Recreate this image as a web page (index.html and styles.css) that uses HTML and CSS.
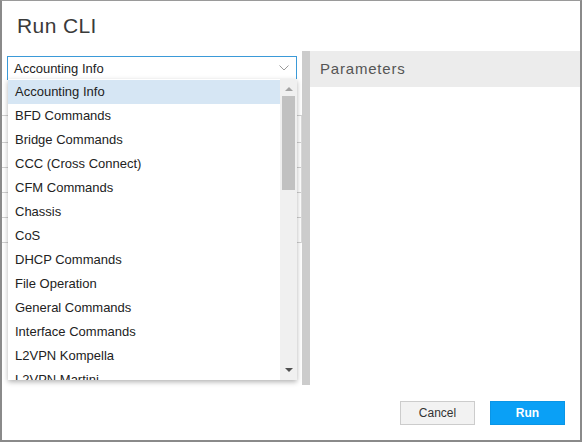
FILE: index.html
```html
<!DOCTYPE html>
<html>
<head>
<meta charset="utf-8">
<link rel="stylesheet" href="styles.css">
</head>
<body>
<div class="dialog">
  <div class="title">Run CLI</div>
  <div class="content">
    <div class="left">
      <div class="select">
        <span>Accounting Info</span>
        <svg class="chev" width="10" height="6" viewBox="0 0 10 6"><polyline points="0.5,0.5 5,5 9.5,0.5" fill="none" stroke="#9a9a9a" stroke-width="1"/></svg>
      </div>
      <div class="table">
        <div class="row"></div>
        <div class="row"></div>
        <div class="row"></div>
        <div class="row"></div>
        <div class="row"></div>
      </div>
      <div class="dropdown">
        <div class="items">
          <div class="item sel">Accounting Info</div>
          <div class="item">BFD Commands</div>
          <div class="item">Bridge Commands</div>
          <div class="item">CCC (Cross Connect)</div>
          <div class="item">CFM Commands</div>
          <div class="item">Chassis</div>
          <div class="item">CoS</div>
          <div class="item">DHCP Commands</div>
          <div class="item">File Operation</div>
          <div class="item">General Commands</div>
          <div class="item">Interface Commands</div>
          <div class="item">L2VPN Kompella</div>
          <div class="item">L2VPN Martini</div>
        </div>
        <div class="scrollbar">
          <div class="arrow up"></div>
          <div class="thumb"></div>
          <div class="track"></div>
          <div class="arrow down"></div>
        </div>
      </div>
    </div>
    <div class="splitter"></div>
    <div class="right">
      <div class="phead">Parameters</div>
    </div>
  </div>
  <div class="footer">
    <button class="btn cancel">Cancel</button>
    <button class="btn run">Run</button>
  </div>
</div>
</body>
</html>
```
FILE: styles.css
```css
html, body {
  margin: 0;
  padding: 0;
  background: #fff;
}
body {
  font-family: "Liberation Sans", Arial, sans-serif;
  color: #222;
}
.dialog {
  width: 582px;
  height: 442px;
  box-sizing: border-box;
  border-top: 1px solid #9a9a9a;
  border-left: 2px solid #8a8a8a;
  border-right: 2px solid #8a8a8a;
  border-bottom: 2px solid #8a8a8a;
  display: flex;
  flex-direction: column;
  background: #fff;
}
.title {
  height: 50px;
  box-sizing: border-box;
  padding: 12px 0 0 15px;
  font-size: 21px;
  letter-spacing: 0.4px;
  color: #3a3a3a;
  line-height: 26px;
}
.content {
  height: 334px;
  display: flex;
}
.left {
  width: 300px;
  position: relative;
}
.select {
  margin: 5px 0 0 5px;
  width: 290px;
  height: 24px;
  box-sizing: border-box;
  border: 1px solid #3b9ad8;
  display: flex;
  align-items: center;
  justify-content: space-between;
  padding: 0 7px 0 6px;
  font-size: 13px;
  color: #222;
}
.chev {
  display: block;
}
.table {
  margin-top: 35px;
  width: 299px;
  border-top: 1px solid #cfcfcf;
  border-right: 1px solid #dadada;
}
.row {
  height: 24px;
  border-bottom: 1px solid #cfcfcf;
}
.row:first-child {
  height: 26px;
}
.dropdown {
  position: absolute;
  left: 6px;
  top: 28px;
  width: 289px;
  height: 301px;
  background: #fff;
  box-shadow: 0 2px 5px rgba(0, 0, 0, 0.3);
  display: flex;
}
.items {
  flex: 1;
  overflow: hidden;
  padding-top: 1px;
}
.item {
  height: 24px;
  line-height: 24px;
  padding-left: 7px;
  font-size: 13px;
  color: #222;
  white-space: nowrap;
}
.item.sel {
  background: #d6e6f4;
}
.scrollbar {
  width: 17px;
  background: #f0f0f0;
  display: flex;
  flex-direction: column;
  align-items: center;
}
.arrow {
  width: 0;
  height: 0;
  border-left: 4px solid transparent;
  border-right: 4px solid transparent;
}
.arrow.up {
  margin-top: 8px;
  border-bottom: 4px solid #a3a3a3;
}
.thumb {
  margin-top: 5px;
  width: 13px;
  height: 94px;
  background: #c1c1c1;
}
.track {
  flex: 1;
}
.arrow.down {
  margin-bottom: 8px;
  border-top: 4px solid #505050;
}
.splitter {
  width: 8px;
  background: #cccccc;
}
.right {
  flex: 1;
}
.phead {
  height: 36px;
  background: #ececec;
  padding-left: 10px;
  font-size: 15px;
  letter-spacing: 0.8px;
  color: #555;
  line-height: 36px;
}
.footer {
  flex: 1;
  display: flex;
  justify-content: flex-end;
  align-items: flex-start;
  gap: 15px;
  padding: 16px 15px 0 0;
}
.btn {
  width: 75px;
  height: 24px;
  font-family: "Liberation Sans", Arial, sans-serif;
  font-size: 12px;
  padding: 0;
  margin: 0;
  cursor: pointer;
}
.cancel {
  background: #f2f2f2;
  border: 1px solid #cccccc;
  color: #333;
}
.run {
  background: #0aa0f6;
  border: 1px solid #0a95e6;
  color: #fff;
  font-weight: bold;
}
```
